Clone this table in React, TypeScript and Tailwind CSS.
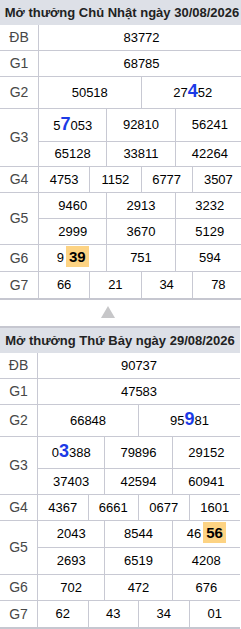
import type { ReactNode } from "react";

const font = { fontFamily: '"Liberation Sans", Arial, sans-serif' };

type Row = { h: string; cells: ReactNode[] };
type Group = { label: string; rows: Row[] };

const cols: Record<number, string> = {
  1: "grid-cols-1",
  2: "grid-cols-2",
  3: "grid-cols-3",
  4: "grid-cols-4",
};

const Big = ({ children }: { children: ReactNode }) => (
  <span className="text-[18px] leading-none font-bold text-[#1c3be6]">{children}</span>
);

const Hot = ({ children }: { children: ReactNode }) => (
  <span className="ml-[2px] bg-[#fdd383] px-[3px] py-[2px] text-[15px] leading-none font-bold text-black">
    {children}
  </span>
);

const Table = ({
  title,
  width,
  labelW,
  groups,
  top,
}: {
  title: string;
  width: string;
  labelW: string;
  groups: Group[];
  top?: boolean;
}) => (
  <div
    className={`${width} border-b-2 border-[#c6c7d0] ${top ? "border-t-2" : ""} bg-white`}
  >
    <div className="flex h-[25px] items-center justify-center bg-[#dde0e7] whitespace-nowrap text-[13px] font-bold text-[#222]">
      {title}
    </div>
    {groups.map((g, gi) => {
      const last = gi === groups.length - 1;
      return (
        <div key={g.label} className="flex">
          <div
            className={`${labelW} flex shrink-0 items-center justify-center border-r border-[#c8c9d3] text-[14px] text-[#474747] ${
              last ? "" : "border-b"
            }`}
          >
            {g.label}
          </div>
          <div className="flex flex-1 flex-col">
            {g.rows.map((r, ri) => (
              <div
                key={ri}
                className={`grid ${cols[r.cells.length]} ${r.h} border-[#c8c9d3] ${last ? "" : "border-b"}`}
              >
                {r.cells.map((c, ci) => (
                  <div
                    key={ci}
                    className={`flex items-center justify-center text-[13px] text-black ${
                      ci < r.cells.length - 1 ? "border-r border-[#c8c9d3]" : ""
                    }`}
                  >
                    <span>{c}</span>
                  </div>
                ))}
              </div>
            ))}
          </div>
        </div>
      );
    })}
  </div>
);

const sunday: Group[] = [
  { label: "ĐB", rows: [{ h: "h-[26px]", cells: ["83772"] }] },
  { label: "G1", rows: [{ h: "h-[26px]", cells: ["68785"] }] },
  {
    label: "G2",
    rows: [
      {
        h: "h-[32px]",
        cells: [
          "50518",
          <>
            27<Big>4</Big>52
          </>,
        ],
      },
    ],
  },
  {
    label: "G3",
    rows: [
      {
        h: "h-[33px]",
        cells: [
          <>
            5<Big>7</Big>053
          </>,
          "92810",
          "56241",
        ],
      },
      { h: "h-[25px]", cells: ["65128", "33811", "42264"] },
    ],
  },
  { label: "G4", rows: [{ h: "h-[26px]", cells: ["4753", "1152", "6777", "3507"] }] },
  {
    label: "G5",
    rows: [
      { h: "h-[26px]", cells: ["9460", "2913", "3232"] },
      { h: "h-[26px]", cells: ["2999", "3670", "5129"] },
    ],
  },
  {
    label: "G6",
    rows: [
      {
        h: "h-[27px]",
        cells: [
          <>
            9<Hot>39</Hot>
          </>,
          "751",
          "594",
        ],
      },
    ],
  },
  { label: "G7", rows: [{ h: "h-[26px]", cells: ["66", "21", "34", "78"] }] },
];

const saturday: Group[] = [
  { label: "ĐB", rows: [{ h: "h-[26px]", cells: ["90737"] }] },
  { label: "G1", rows: [{ h: "h-[26px]", cells: ["47583"] }] },
  {
    label: "G2",
    rows: [
      {
        h: "h-[32px]",
        cells: [
          "66848",
          <>
            95<Big>9</Big>81
          </>,
        ],
      },
    ],
  },
  {
    label: "G3",
    rows: [
      {
        h: "h-[32px]",
        cells: [
          <>
            0<Big>3</Big>388
          </>,
          "79896",
          "29152",
        ],
      },
      { h: "h-[26px]", cells: ["37403", "42594", "60941"] },
    ],
  },
  { label: "G4", rows: [{ h: "h-[26px]", cells: ["4367", "6661", "0677", "1601"] }] },
  {
    label: "G5",
    rows: [
      {
        h: "h-[27px]",
        cells: [
          "2043",
          "8544",
          <>
            46<Hot>56</Hot>
          </>,
        ],
      },
      { h: "h-[27px]", cells: ["2693", "6519", "4208"] },
    ],
  },
  { label: "G6", rows: [{ h: "h-[26px]", cells: ["702", "472", "676"] }] },
  { label: "G7", rows: [{ h: "h-[26px]", cells: ["62", "43", "34", "01"] }] },
];

export default function App() {
  return (
    <div className="w-[241px] overflow-hidden bg-white" style={font}>
      <Table title="Mở thưởng Chủ Nhật ngày 30/08/2026" width="w-[244px]" labelW="w-[39px]" groups={sunday} />
      <div className="flex h-[26px] items-start pt-[6px] pl-[101px]">
        <svg width="14" height="12" viewBox="0 0 14 12">
          <polygon points="7,0 14,12 0,12" fill="#c7c7c9" />
        </svg>
      </div>
      <Table
        title="Mở thưởng Thứ Bảy ngày 29/08/2026"
        width="w-[240px]"
        labelW="w-[38px]"
        groups={saturday}
        top
      />
    </div>
  );
}
